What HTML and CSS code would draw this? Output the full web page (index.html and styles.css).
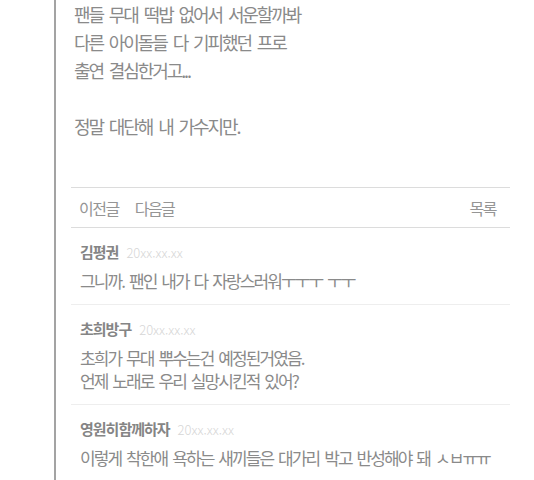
FILE: index.html
```html
<!DOCTYPE html>
<html lang="ko">
<head>
  <meta charset="UTF-8" />
  <meta name="viewport" content="width=device-width, initial-scale=1.0"/>
  <title>게시글</title>
  <link rel="stylesheet" href="styles.css">
</head>
<body>

<div class="post">
  <!-- 본문 -->
  <div class="post-body">
    <p>팬들 무대 떡밥 없어서 서운할까봐</p>
    <p>다른 아이돌들 다 기피했던 프로</p>
    <p>출연 결심한거고...</p>
    <p>&nbsp;</p>
    <p>정말 대단해 내 가수지만.</p>
  </div>

  <!-- 이전글 / 다음글 / 목록 -->
  <div class="post-nav">
    <div class="nav-left">
      <a href="#">이전글</a>
      <a href="#">다음글</a>
    </div>
    <a href="#">목록</a>
  </div>

  <!-- 댓글 -->
  <ul class="comments">
    <li class="comment">
      <div class="comment-head"><strong>김평권</strong><span class="date">20xx.xx.xx</span></div>
      <p>그니까. 팬인 내가 다 자랑스러워ㅜㅜㅜ ㅜㅜ</p>
    </li>
    <li class="comment">
      <div class="comment-head"><strong>초희방구</strong><span class="date">20xx.xx.xx</span></div>
      <p>초희가 무대 뿌수는건 예정된거였음.<br>언제 노래로 우리 실망시킨적 있어?</p>
    </li>
    <li class="comment">
      <div class="comment-head"><strong>영원히함께하자</strong><span class="date">20xx.xx.xx</span></div>
      <p>이렇게 착한애 욕하는 새끼들은 대가리 박고 반성해야 돼 ㅅㅂㅠㅠ</p>
    </li>
  </ul>
</div>

</body>
</html>
```

FILE: styles.css
```css
body {
  margin: 0;
  background: #fff;
  font-family: 'Noto Sans CJK KR', 'Noto Sans', sans-serif;
  color: #8a8a8a;
  overflow: hidden;
}

.post {
  margin-left: 54px;
  width: 439px;
  min-height: 480px;
  border-left: 2px solid #a3a3a3;
  padding-left: 15px;
}

.post-body {
  padding-left: 3px;
  margin-bottom: 47px;
  font-size: 18px;
  letter-spacing: -2.1px;
  word-spacing: 3px;
}

.post-body p {
  margin: 0;
  line-height: 28px;
}

.post-nav {
  display: flex;
  justify-content: space-between;
  align-items: center;
  height: 39px;
  padding: 0 14px 0 8px;
  border-top: 1px solid #dcdcdc;
  border-bottom: 1px solid #dcdcdc;
  font-size: 16px;
  letter-spacing: -1.5px;
}

.nav-left {
  display: flex;
  gap: 16px;
}

.post-nav a {
  color: #959595;
  text-decoration: none;
}

.comments {
  list-style: none;
  margin: 0;
  padding: 0;
}

.comment {
  padding: 13px 9px 12px;
  border-bottom: 1px solid #eeeeee;
}

.comment:last-child {
  border-bottom: none;
}

.comment-head {
  line-height: 22px;
  font-size: 15px;
  letter-spacing: -1px;
}

.comment-head strong {
  color: #858585;
}

.date {
  margin-left: 8px;
  font-size: 13px;
  color: #d6d6d6;
  letter-spacing: 0;
  font-weight: 300;
}

.comment p {
  margin: 5px 0 0;
  font-size: 17px;
  line-height: 23px;
  letter-spacing: -1.9px;
  word-spacing: 2px;
}
```
